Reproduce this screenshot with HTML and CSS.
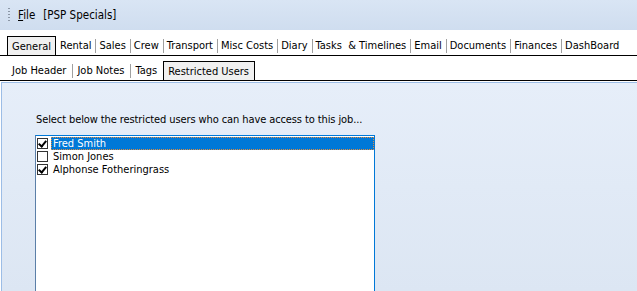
FILE: index.html
```html
<!DOCTYPE html>
<html>
<head>
<meta charset="utf-8">
<link rel="stylesheet" href="styles.css">
</head>
<body>
<div class="window">
  <div class="menubar">
    <span class="grip"></span>
    <span class="menu"><u>F</u>ile</span>
    <span class="menu title">[PSP Specials]</span>
  </div>
  <div class="spacer"></div>
  <div class="tabs tabs-main">
    <span class="tab active">General</span>
    <span class="tab">Rental</span>
    <span class="tab">Sales</span>
    <span class="tab">Crew</span>
    <span class="tab">Transport</span>
    <span class="tab">Misc Costs</span>
    <span class="tab">Diary</span>
    <span class="tab">Tasks &nbsp;&amp; Timelines</span>
    <span class="tab">Email</span>
    <span class="tab">Documents</span>
    <span class="tab">Finances</span>
    <span class="tab">DashBoard</span>
  </div>
  <div class="tabs tabs-sub">
    <span class="tab">Job Header</span>
    <span class="tab">Job Notes</span>
    <span class="tab">Tags</span>
    <span class="tab active">Restricted Users</span>
  </div>
  <div class="panel">
    <p class="prompt">Select below the restricted users who can have access to this job...</p>
    <div class="listbox">
      <div class="item selected"><span class="check on"></span><span class="label">Fred Smith</span></div>
      <div class="item"><span class="check"></span><span class="label">Simon Jones</span></div>
      <div class="item"><span class="check on"></span><span class="label">Alphonse Fotheringrass</span></div>
    </div>
  </div>
</div>
</body>
</html>
```

FILE: styles.css
```css
html, body {
  margin: 0;
  padding: 0;
  height: 100%;
  overflow: hidden;
  background: #ffffff;
}
body {
  font-family: "DejaVu Sans Condensed", "DejaVu Sans", sans-serif;
  font-size: 11px;
  color: #000;
}
.window {
  display: flex;
  flex-direction: column;
  height: 291px;
  overflow: hidden;
}
.menubar {
  height: 30px;
  flex: none;
  display: flex;
  align-items: center;
  background: linear-gradient(#d9e5f4, #cfddef);
  padding-left: 8px;
  box-sizing: border-box;
}
.grip {
  width: 2px;
  height: 16px;
  margin-right: 8px;
  background-image: radial-gradient(circle, #8b97a6 0.9px, transparent 1.1px);
  background-size: 2px 3px;
  background-repeat: repeat-y;
}
.menu {
  font-size: 11.5px;
  margin-right: 6px;
}
.menu u { text-decoration: underline; }
.title { margin-left: 2px; }
.spacer {
  height: 6px;
  flex: none;
}
.tabs {
  display: flex;
  align-items: flex-end;
  border-bottom: 1px solid #000;
  flex: none;
}
.tabs-main {
  height: 19px;
  padding-left: 7px;
}
.tabs-sub {
  height: 24px;
  padding-left: 7px;
}
.tab {
  padding: 0 4px;
  border-left: 1px solid #a0a0a0;
  box-sizing: border-box;
  white-space: pre;
  margin-bottom: 2px;
  height: 14px;
  line-height: 14px;
  font-size: 11px;
}
.tabs-main .tab {
  padding: 0 4px 0 3px;
}
.tabs-sub .tab {
  padding: 0 6px 0 4px;
}
.tab:first-child { border-left-color: transparent; }
.tab.active + .tab { border-left-color: transparent; }
.tabs .tab.active {
  background: #f0f0f0;
  border: 1px solid #000;
  border-bottom: none;
  margin-bottom: 0;
  height: 19px;
  line-height: 19px;
  padding: 0 4px;
}
.tabs-sub .tab.active {
  padding: 0 5px 0 4px;
}
.panel {
  flex: 1;
  margin-top: 1px;
  border-top: 1px solid #9cbde6;
  border-left: 1px solid #9cbde6;
  margin-left: 1px;
  background: linear-gradient(#e6eef9, #dce6f3);
  padding-left: 33px;
  display: flex;
  flex-direction: column;
  min-height: 0;
  overflow: hidden;
}
.prompt {
  margin: 30px 0 0 1px;
  font-size: 11px;
  line-height: 14px;
  letter-spacing: -0.1px;
  flex: none;
}
.listbox {
  margin-top: 8px;
  width: 340px;
  flex: 1;
  margin-bottom: -4px;
  box-sizing: border-box;
  background: #fff;
  border: 1px solid #0078d7;
  border-left-color: #5b7fa8;
  padding-top: 1px;
}
.item {
  display: flex;
  align-items: center;
  height: 13px;
  font-size: 11px;
  line-height: 13px;
}
.check {
  width: 11px;
  height: 11px;
  box-sizing: border-box;
  border: 1px solid #333;
  margin-left: 1px;
  margin-right: 3px;
  background: #fff;
  position: relative;
  flex: none;
}
.check.on::after {
  content: "";
  position: absolute;
  left: 2px;
  top: 0px;
  width: 3px;
  height: 6px;
  border: solid #000;
  border-width: 0 2px 2px 0;
  transform: rotate(40deg);
}
.label {
  flex: 1;
  padding-left: 2px;
  height: 13px;
  box-sizing: border-box;
}
.item.selected .label {
  background: #0078d7;
  color: #fff;
  outline: 1px dotted #e08a3c;
  outline-offset: -1px;
}
```
